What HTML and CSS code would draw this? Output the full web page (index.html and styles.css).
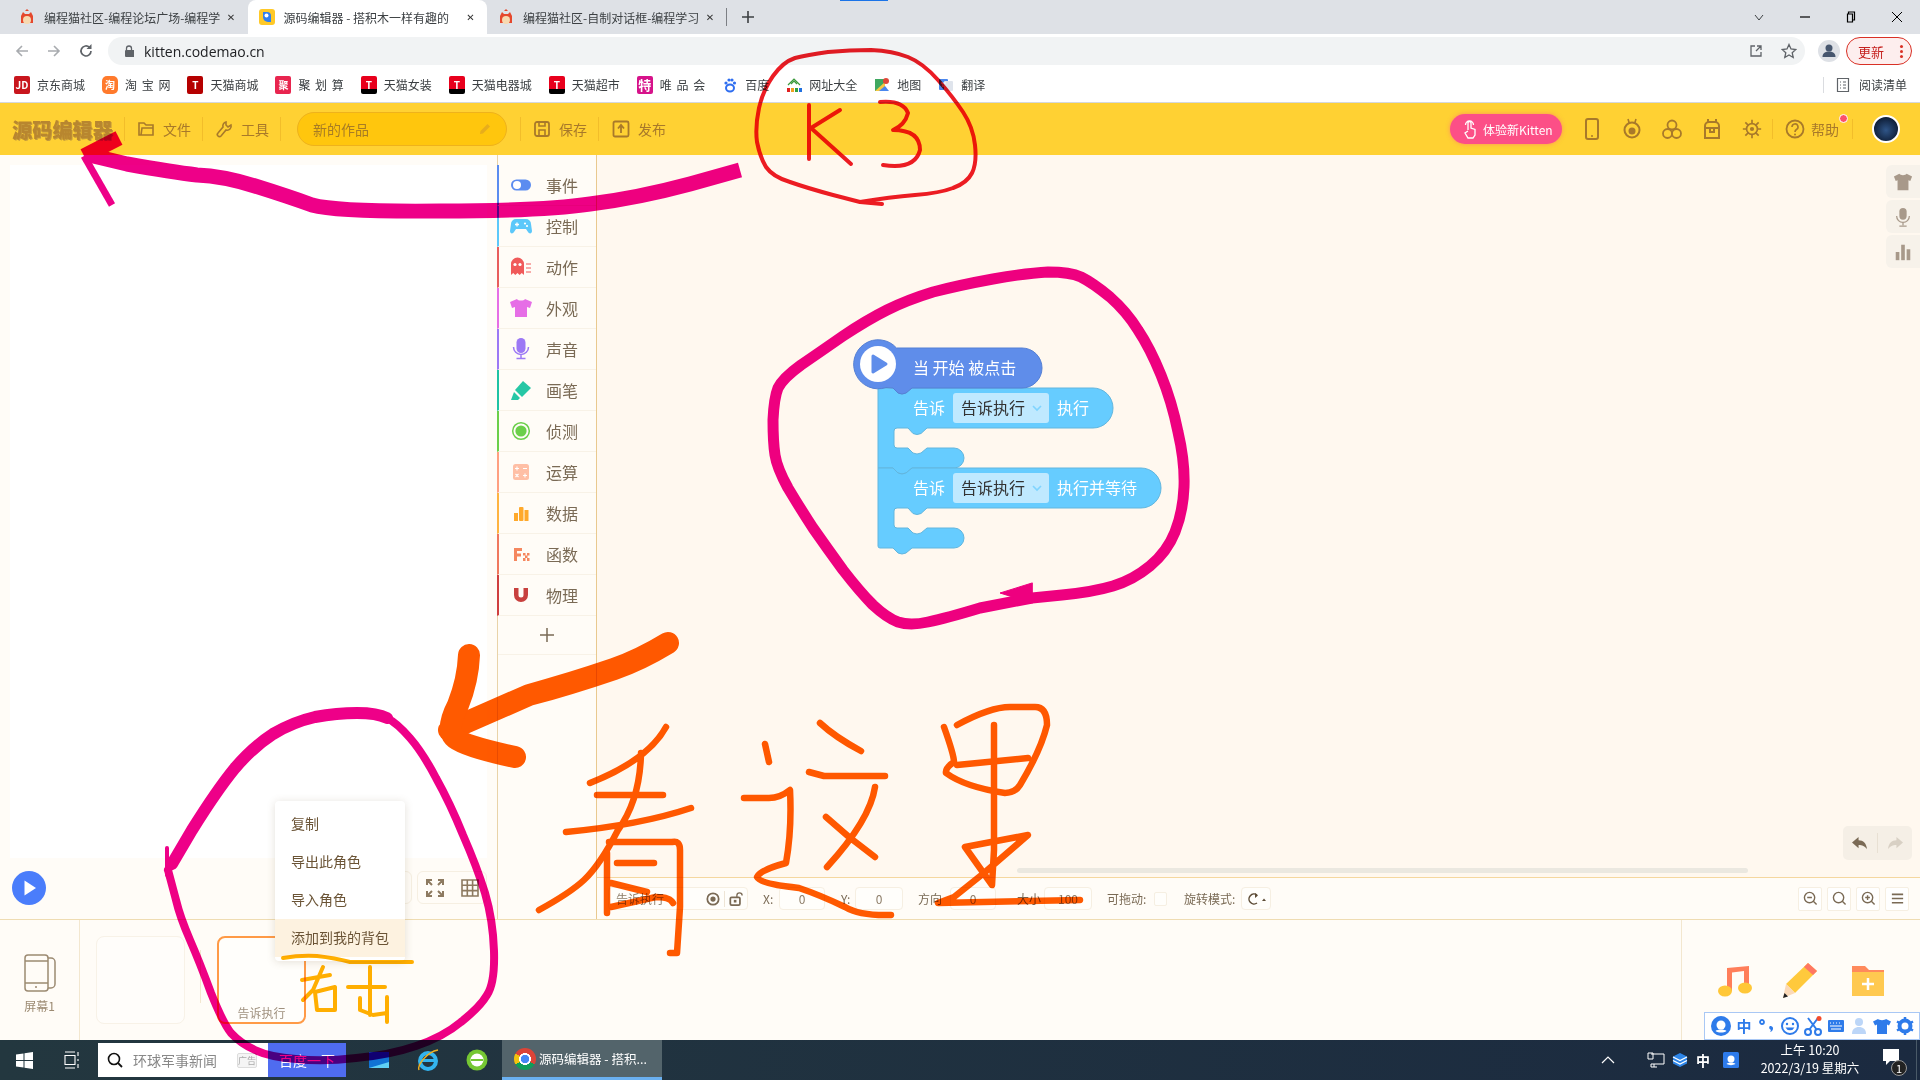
FILE: index.html
```html
<!DOCTYPE html>
<html lang="zh-CN">
<head>
<meta charset="utf-8">
<title>源码编辑器</title>
<link rel="stylesheet" href="styles.css">
</head>
<body>
<div class="tabbar">
  <div class="progress"></div>
  <div class="tab">
    <svg class="fav" viewBox="0 0 16 16"><path d="M2 14V7l2-4 2 2h4l2-2 2 4v7z" fill="#e5482d"/><circle cx="8" cy="11" r="4" fill="#f7d9b0"/><path d="M6 2l2-2 2 2z" fill="#e5482d"/></svg>
    <span class="tab-title">编程猫社区-编程论坛广场-编程学</span><span class="tab-x">✕</span>
  </div>
  <div class="tab active">
    <svg class="fav" viewBox="0 0 16 16"><rect width="16" height="16" rx="3" fill="#ffc928"/><path d="M4 3h4a4 4 0 0 1 4 4v6H9a5 5 0 0 1-5-5z" fill="#2f7ff0"/><circle cx="7.5" cy="6.5" r="2" fill="#fff"/></svg>
    <span class="tab-title">源码编辑器 - 搭积木一样有趣的</span><span class="tab-x">✕</span>
  </div>
  <div class="tab">
    <svg class="fav" viewBox="0 0 16 16"><path d="M2 14V7l2-4 2 2h4l2-2 2 4v7z" fill="#e5482d"/><circle cx="8" cy="11" r="4" fill="#f7d9b0"/><path d="M6 2l2-2 2 2z" fill="#e5482d"/></svg>
    <span class="tab-title">编程猫社区-自制对话框-编程学习</span><span class="tab-x">✕</span>
  </div>
  <div class="tab-sep"></div>
  <svg class="tab-plus" viewBox="0 0 14 14"><path d="M7 1v12M1 7h12" stroke="#3c4043" stroke-width="1.6"/></svg>
  <div class="win-btns">
    <svg class="win" viewBox="0 0 12 12"><path d="M2 4l4 5 4-5" fill="none" stroke="#3c4043"/></svg>
    <svg class="win" viewBox="0 0 12 12"><path d="M1 6h10" stroke="#000" stroke-width="1.2"/></svg>
    <svg class="win" viewBox="0 0 12 12"><path d="M3.5 3V1h6v8h-2M2.500 3h5v8h-5z" fill="none" stroke="#000" stroke-width="1.2"/></svg>
    <svg class="win" viewBox="0 0 12 12"><path d="M1 1l10 10M11 1L1 11" stroke="#000"/></svg>
  </div>
</div>

<div class="toolbar">
  <svg class="nav" viewBox="0 0 16 16"><path d="M14 8H3M8 3L3 8l5 5" fill="none" stroke="#a8abaf" stroke-width="1.6"/></svg>
  <svg class="nav" viewBox="0 0 16 16"><path d="M2 8h11M8 3l5 5-5 5" fill="none" stroke="#a8abaf" stroke-width="1.6"/></svg>
  <svg class="nav" viewBox="0 0 16 16"><path d="M13 8a5 5 0 1 1-1.500-3.600" fill="none" stroke="#5f6368" stroke-width="1.7"/><path d="M13.500 1v5h-5z" fill="#5f6368"/></svg>
  <div class="address">
    <svg class="lock" viewBox="0 0 10 12"><path d="M2.500 5V3.500a2.500 2.500 0 0 1 5 0V5" fill="none" stroke="#5f6368" stroke-width="1.300"/><rect y="5" width="10" height="7" rx="1" fill="#5f6368" x="1"/></svg>
    <span class="url">kitten.codemao.cn</span>
    <svg class="addr-ic share" viewBox="0 0 16 16"><path d="M9 3h4v4M13 3L8 8M7 3H3v10h10V9" fill="none" stroke="#5f6368" stroke-width="1.300"/></svg>
    <svg class="addr-ic" viewBox="0 0 16 16"><path d="M8 1.500l2 4.500 4.800.5-3.600 3.200 1 4.800L8 12l-4.200 2.500 1-4.800L1.200 6.500 6 6z" fill="none" stroke="#5f6368" stroke-width="1.300"/></svg>
  </div>
  <div class="profile"><svg viewBox="0 0 22 22"><circle cx="11" cy="11" r="11" fill="#dee1e6"/><circle cx="11" cy="8" r="3.500" fill="#46566e"/><path d="M4.500 17c0-4 3-5.500 6.500-5.500s6.500 1.500 6.500 5.500z" fill="#46566e"/></svg></div>
  <div class="update"><span>更新</span><i class="dots"></i></div>
</div>

<div class="bookmarks">
  <div class="bm"><i class="bi b-jd">JD</i>京东商城</div>
  <div class="bm"><i class="bi b-tb">淘</i>淘 宝 网</div>
  <div class="bm"><i class="bi b-t1">T</i>天猫商城</div>
  <div class="bm"><i class="bi b-ju">聚</i>聚 划 算</div>
  <div class="bm"><i class="bi b-t2">T</i>天猫女装</div>
  <div class="bm"><i class="bi b-t2">T</i>天猫电器城</div>
  <div class="bm"><i class="bi b-t2">T</i>天猫超市</div>
  <div class="bm"><i class="bi b-te">特</i>唯 品 会</div>
  <div class="bm"><svg class="bsvg" viewBox="0 0 16 16"><ellipse cx="8" cy="11" rx="4" ry="3.500" fill="none" stroke="#2f6ef0" stroke-width="2"/><circle cx="4" cy="6" r="1.600" fill="#2f6ef0"/><circle cx="7" cy="3" r="1.600" fill="#2f6ef0"/><circle cx="10" cy="3" r="1.600" fill="#2f6ef0"/><circle cx="12.500" cy="6" r="1.600" fill="#2f6ef0"/></svg>百度</div>
  <div class="bm"><svg class="bsvg" viewBox="0 0 16 16"><path d="M2 8l6-6 6 6M5 7l3-3 3 3" fill="none" stroke="#3c9a3c" stroke-width="1.200"/><rect x="1" y="11" width="3" height="4" fill="#e02020"/><rect x="5" y="11" width="3" height="4" fill="#f0a020"/><rect x="9" y="11" width="3" height="4" fill="#30a040"/><rect x="13" y="11" width="3" height="4" fill="#2070e0"/></svg>网址大全</div>
  <div class="bm"><svg class="bsvg" viewBox="0 0 16 16"><path d="M1 2h10v12H1z" fill="#3fa860"/><path d="M1 14L11 5v9z" fill="#f6c843"/><path d="M5 14l6-5 4 5z" fill="#4a87ee"/><circle cx="12" cy="4" r="3" fill="#e0483a"/></svg>地图</div>
  <div class="bm"><svg class="bsvg" viewBox="0 0 16 16"><rect x="1" y="2" width="9" height="11" rx="1" fill="#4a87ee"/><rect x="6" y="4" width="9" height="10" rx="1" fill="#dfe4ec"/><path d="M3 6h5M5 6v4" stroke="#fff"/></svg>翻译</div>
  <div class="reading">
    <svg class="bsvg" viewBox="0 0 16 16"><path d="M2.500 1.500h11v13h-11zM5 5h1M8 5h3M5 8h1M8 8h3M5 11h1M8 11h3" fill="none" stroke="#5f6368" stroke-width="1.200"/></svg>阅读清单
  </div>
</div>

<header class="appbar">
  <div class="logo">源码编辑器</div>
  <div class="hsep"></div>
  <div class="hitem"><svg class="hic" viewBox="0 0 18 18"><path d="M2 15V3h5l2 2h7v3H5l-1 7zM4 15h12V8" fill="none" stroke="#a8792a" stroke-width="1.600"/></svg>文件</div>
  <div class="hsep"></div>
  <div class="hitem"><svg class="hic" viewBox="0 0 18 18"><path d="M11 2a4 4 0 0 0-3 5l-5 6a2 2 0 0 0 3 3l5-6a4 4 0 0 0 5-5l-3 2-2-2z" fill="none" stroke="#a8792a" stroke-width="1.600"/></svg>工具</div>
  <div class="hsep sep-proj"></div>
  <div class="project"><span>新的作品</span><svg class="pen" viewBox="0 0 14 14"><path d="M9.500 2l2.500 2.500-7 7-3 .5.500-3z" fill="#e7ad1c"/></svg></div>
  <div class="hsep sep-save"></div>
  <div class="hitem"><svg class="hic" viewBox="0 0 18 18"><rect x="2" y="2" width="14" height="14" rx="2" fill="none" stroke="#a8792a" stroke-width="1.800"/><path d="M6 2v4h6V2M6 16v-6h6v6" fill="none" stroke="#a8792a" stroke-width="1.600"/></svg>保存</div>
  <div class="hsep sep-pub"></div>
  <div class="hitem"><svg class="hic" viewBox="0 0 18 18"><rect x="1.500" y="1.500" width="15" height="15" rx="1.500" fill="none" stroke="#a8792a" stroke-width="1.800"/><path d="M9 13V6M6 8.500L9 5l3 3.500" fill="none" stroke="#a8792a" stroke-width="1.800"/></svg>发布</div>
  <div class="appbar-right">
    <div class="try"><svg class="hand" viewBox="0 0 16 20"><path d="M6 11V4a1.500 1.500 0 0 1 3 0v5l4 1.500V16l-2 3H6l-3-5 3-2M3.500 6a4 4 0 0 1 8 0" fill="none" stroke="#fff" stroke-width="1.300"/></svg>体验新Kitten</div>
    <svg class="ric first" viewBox="0 0 20 24"><rect x="4" y="2" width="12" height="20" rx="2" fill="none" stroke="#a8792a" stroke-width="2"/><circle cx="10" cy="19" r="1" fill="#a8792a"/></svg>
    <svg class="ric" viewBox="0 0 20 24"><path d="M6 2l1.500 5M14 2l-1.500 5" stroke="#a8792a" stroke-width="1.600"/><circle cx="10" cy="13" r="7.500" fill="none" stroke="#a8792a" stroke-width="2"/><circle cx="10" cy="14" r="3.500" fill="#a8792a"/></svg>
    <svg class="ric" viewBox="0 0 20 24"><g fill="none" stroke="#a8792a" stroke-width="1.800"><circle cx="10" cy="8" r="4.500"/><circle cx="5.500" cy="16.500" r="4.500"/><circle cx="14.500" cy="16.500" r="4.500"/></g></svg>
    <svg class="ric" viewBox="0 0 20 24"><path d="M6 5V2M14 5V2M3 9a4 4 0 0 1 4-4h6a4 4 0 0 1 4 4v12H3zM3 11h14M8 11v4h4v-4" fill="none" stroke="#a8792a" stroke-width="2"/></svg>
    <svg class="ric" viewBox="0 0 24 24"><circle cx="12" cy="12" r="6.500" fill="none" stroke="#a8792a" stroke-width="2"/><circle cx="12" cy="12" r="2.500" fill="#a8792a"/><path d="M12 1v5M12 18v5M1 12h5M18 12h5M4 4l4 4M16 16l4 4M20 4l-4 4M8 16l-4 4" stroke="#a8792a" stroke-width="2"/></svg>
    <div class="hsep sep-help"></div>
    <div class="help"><svg class="hic big" viewBox="0 0 20 20"><circle cx="10" cy="10" r="8.500" fill="none" stroke="#a8792a" stroke-width="1.800"/><path d="M7 8a3 3 0 1 1 4.500 2.500c-1 .6-1.500 1-1.500 2.500" fill="none" stroke="#a8792a" stroke-width="1.600"/><circle cx="10" cy="15.500" r="1" fill="#a8792a"/></svg>帮助<i class="reddot"></i></div>
    <div class="hsep sep-av"></div>
    <div class="avatar"></div>
  </div>
</header>

<main class="main">
  <section class="left">
    <div class="stage"></div>
    <div class="stage-ctl">
      <div class="run"><svg viewBox="0 0 34 34"><circle cx="17" cy="17" r="17" fill="#4a7dfb"/><path d="M12.500 9.500L24 17l-11.500 7.500z" fill="#fff"/></svg></div>
      <div class="ctl-box hidden-box"></div>
      <div class="ctl-box">
        <svg class="ctl-ic" viewBox="0 0 18 18"><path d="M1 6V1h5M12 1h5v5M17 12v5h-5M6 17H1v-5M1 1l5 5M17 1l-5 5M17 17l-5-5M1 17l5-5" fill="none" stroke="#8d7a60" stroke-width="2"/></svg>
        <svg class="ctl-ic" viewBox="0 0 18 18"><path d="M1 1h16v16H1zM1 6.300h16M1 11.600h16M6.300 1v16M11.600 1v16" fill="none" stroke="#8d7a60" stroke-width="1.600"/></svg>
      </div>
    </div>
  </section>

  <nav class="cats">
    <div class="cat c1"><svg class="cat-ic" viewBox="0 0 24 24"><rect x="2" y="6.500" width="20" height="11" rx="5.500" fill="#5b8cf0"/><circle cx="8" cy="12" r="4" fill="#fff"/></svg>事件</div>
    <div class="cat c2"><svg class="cat-ic" viewBox="0 0 24 24"><path d="M7 5h10a5 5 0 0 1 5 5l1 7c0 3-3 3-4 1l-2-3H7l-2 3c-1 2-4 2-4-1l1-7a5 5 0 0 1 5-5z" fill="#5cc8fa"/><path d="M6 10.500h4M8 8.500v4" stroke="#fff" stroke-width="1.300"/><circle cx="16" cy="9.500" r="1.100" fill="#fff"/><circle cx="18" cy="12" r="1.100" fill="#fff"/></svg>控制</div>
    <div class="cat c3"><svg class="cat-ic" viewBox="0 0 24 24"><path d="M2 20V9a6.500 6.500 0 0 1 13 0v11l-2.200-2-2.200 2-2.100-2-2.200 2-2.100-2z" fill="#f05a5a"/><circle cx="6" cy="9.500" r="1.600" fill="#fff"/><circle cx="11" cy="9.500" r="1.600" fill="#fff"/><path d="M17 9h5M17 13h5M17 17h5" stroke="#f05a5a" stroke-width="1"/></svg>动作</div>
    <div class="cat c4"><svg class="cat-ic" viewBox="0 0 24 24"><path d="M8 3c1 2 7 2 8 0l7 3-2 6-3-1v10H6V11l-3 1-2-6z" fill="#e66ee6"/></svg>外观</div>
    <div class="cat c5"><svg class="cat-ic" viewBox="0 0 24 24"><rect x="7.500" y="1" width="9" height="15" rx="4.500" fill="#9c78f5"/><path d="M4.500 10a7.500 7.500 0 0 0 15 0M12 18v3M7.500 21.500h9" fill="none" stroke="#9c78f5" stroke-width="1.500"/></svg>声音</div>
    <div class="cat c6"><svg class="cat-ic" viewBox="0 0 24 24"><path d="M14 3l8 7-9 9-7-7z" fill="#26c7a5"/><path d="M5 14l-3 8h7l2-2z" fill="#26c7a5"/></svg>画笔</div>
    <div class="cat c7"><svg class="cat-ic" viewBox="0 0 24 24"><circle cx="12" cy="12" r="8.300" fill="none" stroke="#6bcf4a" stroke-width="1.500"/><circle cx="12" cy="12" r="5.600" fill="#6bcf4a"/></svg>侦测</div>
    <div class="cat c8"><svg class="cat-ic" viewBox="0 0 24 24"><rect x="4" y="4" width="16" height="16" rx="2.500" fill="#ffbfa5"/><path d="M6 8.500h4M8 6.500v4M14 8.500h4M6.500 14l3 3M9.500 14l-3 3M14 15.500h4M16 13.500v4" stroke="#fff" stroke-width="1.100"/></svg>运算</div>
    <div class="cat c9"><svg class="cat-ic" viewBox="0 0 24 24"><rect x="5" y="12" width="4" height="8" fill="#ffa92b"/><rect x="10" y="6" width="4.500" height="14" rx="1" fill="#ffa92b"/><rect x="15.500" y="9" width="4" height="11" fill="#ffa92b"/></svg>数据</div>
    <div class="cat c10"><svg class="cat-ic" viewBox="0 0 24 24"><path d="M5 6h8v3H8v2.500h4v3H8V19H5z" fill="#f5875f"/><path d="M14 11h2.500v2.500H14zM18 11h2.500v2.500H18zM16 13.500h2.500v2.500H16zM14 16h2.500v3H14zM18 16h2.500v3H18z" fill="#f5875f"/></svg>函数</div>
    <div class="cat c11"><svg class="cat-ic" viewBox="0 0 24 24"><path d="M5 5v7a7 7 0 0 0 14 0V5h-4.500v7a2.500 2.500 0 0 1-5 0V5z" fill="#c8403e"/></svg>物理</div>
    <div class="cat-add"><svg viewBox="0 0 14 14"><path d="M7 0v14M0 7h14" stroke="#7a6a55" stroke-width="1.500"/></svg></div>
  </nav>

  <section class="right">
    <div class="workspace">
      <svg class="blocks" viewBox="0 0 1323 723">
        <g transform="translate(-597 -155)" class="blk">
          <path class="b-mid" d="M878 388L893 388L898 393Q902 395 906 393L912 388L1093 388A20 20 0 0 1 1093 428L927 428L921 433.500Q917 435.500 913 433.500L908 428L897 428Q894 428 894 431L894 445Q894 448 897 448L908 448L913 453Q917 455 921 453L927 448L954 448A10 10 0 0 1 954 468L912 468L906 473Q902 475 898 473L893 468L878 468Z"/>
          <path class="b-mid" d="M878 468L893 468L898 473Q902 475 906 473L912 468L1141 468A20 20 0 0 1 1141 508L927 508L921 513.500Q917 515.500 913 513.500L908 508L897 508Q894 508 894 511L894 525Q894 528 897 528L908 528L913 533Q917 535 921 533L927 528L954 528A10 10 0 0 1 954 548L912 548L906 553Q902 555 898 553L893 548L880 548Q878 548 878 546Z"/>
          <path class="b-hat" d="M896.500 348L1022 348A20 20 0 0 1 1022 388L912 388L906 393Q902 395 898 393L893 388L886 387.500A24.500 24.500 0 1 1 896.500 348Z"/>
          <circle cx="878" cy="364" r="18" fill="#fff"/>
          <path d="M873 356L886 364L873 372Z" fill="#5f8dea" stroke="#5f8dea" stroke-width="3" stroke-linejoin="round"/>
          <text class="bt" x="913" y="374">当 开始 被点击</text>
          <text class="bt" x="913" y="414">告诉</text>
          <rect class="fld" x="953" y="393" width="96" height="30" rx="3"/>
          <text class="bf" x="961" y="414">告诉执行</text>
          <path class="chev" d="M1033 406l4 4 4-4"/>
          <text class="bt" x="1057" y="414">执行</text>
          <text class="bt" x="913" y="494">告诉</text>
          <rect class="fld" x="953" y="473" width="96" height="30" rx="3"/>
          <text class="bf" x="961" y="494">告诉执行</text>
          <path class="chev" d="M1033 486l4 4 4-4"/>
          <text class="bt" x="1057" y="494">执行并等待</text>
        </g>
      </svg>
      <div class="rail">
        <div class="rail-tab"><svg viewBox="0 0 22 22"><path d="M7 2c1 2 7 2 8 0l6 3-2 5-2-1v11H5V9L3 10 1 5z" fill="#a8998a"/></svg></div>
        <div class="rail-tab"><svg viewBox="0 0 22 22"><rect x="7" y="1" width="8" height="13" rx="4" fill="#a8998a"/><path d="M4 10a7 7 0 0 0 14 0M11 17v3M7 21h8" fill="none" stroke="#a8998a" stroke-width="1.400"/></svg></div>
        <div class="rail-tab"><svg viewBox="0 0 22 22"><rect x="3" y="11" width="4" height="9" fill="#a8998a"/><rect x="9" y="3" width="4" height="17" fill="#a8998a"/><rect x="15" y="8" width="4" height="12" fill="#a8998a"/></svg></div>
      </div>
      <div class="undo">
        <svg viewBox="0 0 18 16"><path d="M8 1L1 7l7 6V9.500c4 0 6.500 1 9 4.500-.5-6-4-9.500-9-9.500z" fill="#7a6a55"/></svg>
        <i></i>
        <svg viewBox="0 0 18 16"><path d="M10 1l7 6-7 6V9.500c-4 0-6.500 1-9 4.500 .5-6 4-9.500 9-9.500z" fill="#d8d0c4"/></svg>
      </div>
      <div class="hscroll"></div>
    </div>
    <div class="props">
      <div class="inp name"><span>告诉执行</span>
        <svg class="pi eye" viewBox="0 0 16 16"><circle cx="8" cy="8" r="6.500" fill="none" stroke="#7a6a55" stroke-width="2"/><circle cx="8" cy="8" r="3" fill="#7a6a55"/></svg><i class="nsep"></i>
        <svg class="pi" viewBox="0 0 16 16"><rect x="1.500" y="6" width="11" height="9" rx="1.500" fill="none" stroke="#7a6a55" stroke-width="2"/><rect x="5.500" y="9" width="3" height="3" fill="#7a6a55"/><path d="M9 6V4a3 3 0 0 1 6 0" fill="none" stroke="#7a6a55" stroke-width="1.500"/></svg>
      </div>
      <label class="pl lx">X:</label><div class="inp w46">0</div>
      <label class="pl ly">Y:</label><div class="inp w48">0</div>
      <label class="pl ld">方向</label><div class="inp w46">0</div>
      <label class="pl ls">大小</label><div class="inp w48">100</div>
      <label class="pl ldrag">可拖动:</label><div class="chk"></div>
      <label class="pl lrot">旋转模式:</label>
      <div class="inp rot"><svg viewBox="0 0 20 14"><path d="M11 3a5 5 0 1 0 0 8" fill="none" stroke="#5d4c36" stroke-width="1.500"/><path d="M9 1v5l3-2.500zM16 9h4l-2-2.500z" fill="#5d4c36"/></svg></div>
      <div class="zooms">
        <div class="zb"><svg viewBox="0 0 16 16"><circle cx="7" cy="7" r="5.500" fill="none" stroke="#7a6a55" stroke-width="1.500"/><path d="M4.500 7h5M11 11l3.500 3.500" stroke="#7a6a55" stroke-width="1.500"/></svg></div>
        <div class="zb"><svg viewBox="0 0 16 16"><circle cx="7" cy="7" r="5.500" fill="none" stroke="#7a6a55" stroke-width="1.500"/><path d="M11 11l3.500 3.500" stroke="#7a6a55" stroke-width="1.500"/></svg></div>
        <div class="zb"><svg viewBox="0 0 16 16"><circle cx="7" cy="7" r="5.500" fill="none" stroke="#7a6a55" stroke-width="1.500"/><path d="M4.500 7h5M7 4.500v5M11 11l3.500 3.500" stroke="#7a6a55" stroke-width="1.500"/></svg></div>
        <div class="zb"><svg viewBox="0 0 16 16"><path d="M2 3.500h12M2 8h12M2 12.500h12" stroke="#7a6a55" stroke-width="1.800"/></svg></div>
      </div>
    </div>
  </section>
</main>

<section class="bottom">
  <div class="screens">
    <svg class="phone" viewBox="0 0 32 38"><rect x="1" y="1" width="23" height="36" rx="3" fill="none" stroke="#9c8a72" stroke-width="1.500"/><path d="M24 4h3a4 4 0 0 1 4 4v22a4 4 0 0 1-4 4h-3M1 7h23M1 29h23" fill="none" stroke="#9c8a72" stroke-width="1.500"/><circle cx="12" cy="33" r="1" fill="#9c8a72"/></svg>
    <span>屏幕1</span>
  </div>
  <div class="card"></div>
  <div class="card-sep"></div>
  <div class="card sel"><span>告诉执行</span></div>
  <div class="assets">
    <svg class="asset" viewBox="0 0 40 40"><path d="M13 8l22-2v22h-5V11l-12 1.500V31h-5z" fill="#ff7e5a"/><ellipse cx="11" cy="31" rx="7" ry="5.500" fill="#ffc738"/><ellipse cx="31" cy="28" rx="7" ry="5.500" fill="#ffc738"/></svg>
    <svg class="asset" viewBox="0 0 40 40"><path d="M27 3l9 8L14 33 5 24z" fill="#ffc93c"/><path d="M27 3l9 8-4 4-9-8z" fill="#ff7763"/><path d="M5 24l9 9-12 5z" fill="#fbd9b8"/><path d="M3.500 33l3.500 3.500-5 1.500z" fill="#222"/></svg>
    <svg class="asset" viewBox="0 0 40 40"><path d="M4 6h13l4 4h15v6H4z" fill="#ff8a5c"/><rect x="4" y="12" width="32" height="24" fill="#ffc950"/><path d="M20 18v12M14 24h12" stroke="#fff" stroke-width="2.500"/></svg>
    <div class="ime">
      <svg class="im" viewBox="0 0 20 20"><circle cx="10" cy="10" r="10" fill="#2e7bea"/><circle cx="10" cy="9" r="4.500" fill="#fff"/><path d="M4.500 15c2-2 9-2 11 0-3 2-8 2-11 0z" fill="#fff"/></svg>
      <b class="imt">中</b>
      <svg class="im" viewBox="0 0 20 20"><circle cx="5" cy="6" r="2" fill="none" stroke="#2e7bea" stroke-width="1.800"/><path d="M13 10a2.500 2.500 0 0 1 3 3c-.3 2-2 3-3 3 1-1 1-2 .5-2.500a2 2 0 0 1-.5-3.500z" fill="#2e7bea"/></svg>
      <svg class="im" viewBox="0 0 20 20"><circle cx="10" cy="10" r="8" fill="none" stroke="#2e7bea" stroke-width="2"/><circle cx="7" cy="8" r="1.200" fill="#2e7bea"/><circle cx="13" cy="8" r="1.200" fill="#2e7bea"/><path d="M5.500 11.500a5 5 0 0 0 9 0z" fill="#2e7bea"/></svg>
      <svg class="im" viewBox="0 0 20 20"><circle cx="5" cy="16" r="3" fill="none" stroke="#2e7bea" stroke-width="2"/><circle cx="15" cy="16" r="3" fill="none" stroke="#2e7bea" stroke-width="2"/><path d="M6 14L15 2M14 14L5 2" stroke="#2e7bea" stroke-width="2"/><circle cx="16" cy="2.500" r="2.500" fill="#f44b2a"/></svg>
      <svg class="im" viewBox="0 0 20 20"><rect x="2" y="4" width="16" height="12" rx="1" fill="#2e7bea"/><path d="M4 7h1M7 7h1M10 7h1M13 7h1M16 7h0M4 10h12M5 13h10" stroke="#fff" stroke-width="1.200"/></svg>
      <svg class="im" viewBox="0 0 20 20"><circle cx="10" cy="6" r="4" fill="#bcd6f8"/><path d="M3 18c0-5 3-7 7-7s7 2 7 7z" fill="#bcd6f8"/></svg>
      <svg class="im" viewBox="0 0 20 20"><path d="M6 3c1 1.500 7 1.500 8 0l5 2.500-2 4-2-1V18H5V8.500l-2 1-2-4z" fill="#2e7bea"/></svg>
      <svg class="im" viewBox="0 0 20 20"><circle cx="10" cy="10" r="5.500" fill="none" stroke="#2e7bea" stroke-width="4"/><path d="M10 1v3M10 16v3M2 5.500l2.600 1.500M15.400 13l2.600 1.500M2 14.500L4.600 13M15.400 7L18 5.500" stroke="#2e7bea" stroke-width="2.500"/></svg>
    </div>
  </div>
</section>

<footer class="taskbar">
  <svg class="tb-win" viewBox="0 0 17 17"><path d="M0 2.500L7.500 1.400v6.600H0zM8.500 1.200L17 0v8H8.500zM0 9h7.500v6.600L0 14.500zM8.500 9H17v8l-8.500-1.200z" fill="#fff"/></svg>
  <svg class="tb-view" viewBox="0 0 18 18"><path d="M3 1h10M3 4.500h10v9H3zM3 17h10M16 1v4M16 8v2M16 13v4" fill="none" stroke="#fff" stroke-width="1.100"/></svg>
  <div class="search">
    <svg class="s-ic" viewBox="0 0 16 16"><circle cx="7" cy="7" r="5.500" fill="none" stroke="#111" stroke-width="1.600"/><path d="M11 11l4 4" stroke="#111" stroke-width="1.800"/></svg>
    <span class="s-text">环球军事新闻</span><span class="s-ad">广告</span>
  </div>
  <div class="s-btn">百度一下</div>
  <svg class="tb-app ol" viewBox="0 0 24 24"><rect x="2" y="4" width="20" height="16" fill="#1173d4"/><path d="M2 20l20-6v6z" fill="#5fd0f5"/></svg>
  <svg class="tb-app" viewBox="0 0 24 24"><circle cx="12" cy="13" r="8" fill="none" stroke="#33b4ee" stroke-width="4"/><path d="M5 12.500h15" stroke="#33b4ee" stroke-width="3"/><path d="M3 22c-2-5 8-18 19-20" fill="none" stroke="#f0b020" stroke-width="1.500"/></svg>
  <svg class="tb-app" viewBox="0 0 24 24"><circle cx="12" cy="12" r="10.500" fill="#75c733"/><circle cx="12" cy="12" r="6.500" fill="#fff"/><path d="M6 11h12v2H6z" fill="#75c733"/></svg>
  <div class="tb-chrome"><i class="chrome"></i><span>源码编辑器 - 搭积...</span></div>
  <div class="tray">
    <svg class="caret" viewBox="0 0 14 8"><path d="M1 7l6-6 6 6" fill="none" stroke="#fff" stroke-width="1.200"/></svg>
    <svg class="ti net" viewBox="0 0 18 16"><path d="M4 2h13v10H4M4 12v3h6M7 12v3M1 1h5v6H1z" fill="none" stroke="#fff"/></svg>
    <svg class="ti stack" viewBox="0 0 16 16"><path d="M8 1l7 3.500v7L8 15l-7-3.500v-7z" fill="#2d85e8"/><path d="M1 5l7 3.500L15 5M1 8.500L8 12l7-3.500" fill="none" stroke="#fff" stroke-width="1.300"/></svg>
    <b class="ti-t">中</b>
    <svg class="ti qq" viewBox="0 0 16 16"><rect width="16" height="16" rx="1.500" fill="#2e7bea"/><circle cx="8" cy="7" r="3.500" fill="#fff"/><path d="M3.500 12c2-2 7-2 9 0-3 1.500-6 1.500-9 0z" fill="#fff"/></svg>
    <div class="clock"><span>上午 10:20</span><span>2022/3/19 星期六</span></div>
    <div class="notif"><svg viewBox="0 0 18 18"><path d="M1 1h16v12H8l-4 4v-4H1z" fill="#fff"/></svg><i>1</i></div>
    <i class="desk"></i>
  </div>
</footer>

<div class="menu">
  <div class="mi">复制</div>
  <div class="mi">导出此角色</div>
  <div class="mi">导入角色</div>
  <div class="mi on">添加到我的背包</div>
</div>

<svg class="ink" viewBox="0 0 1920 1080">
  <g class="red">
    <path d="M882 204L860 202L833 195Q807 188 790 182Q773 177 766 167Q760 157 757 142Q755 127 759 108Q763 90 773 76Q783 62 795 58Q807 55 828 52Q850 50 871 50Q893 51 908 57Q923 63 938 80Q953 97 963 112Q973 127 975 145Q977 163 972 173Q967 183 953 188Q940 193 915 195Q890 197 860 202"/>
    <path d="M809 105V159M840 110L811 128L851 164M880 102Q903 100 908 113Q905 125 893 130Q920 130 920 150Q915 170 883 165"/>
  </g>
  <g class="pink">
    <path class="p-arrow" d="M740 170L690 184Q638 198 590 204Q542 211 440 211Q338 212 312 205Q287 196 255 186Q223 176 197 175Q172 172 127 164L85 154"/>
    <path class="p-head" d="M84 156L119 138"/>
    <path d="M84 156L112 205" class="p-tail"/>
    <path class="p-loop" d="M1032 598L1062 595Q1093 592 1113 586Q1133 580 1150 566Q1167 552 1175 532Q1183 512 1184 487Q1185 462 1178 432Q1172 402 1161 375Q1150 348 1138 330Q1127 312 1110 297Q1093 283 1081 277Q1070 272 1048 272Q1027 273 993 279Q960 285 933 292Q907 300 887 310Q867 320 843 336Q820 352 801 365Q783 378 778 388Q774 398 773 420Q773 442 775 455Q777 468 788 488Q800 508 813 528Q827 548 843 570Q860 592 873 605Q887 618 898 622Q910 626 928 622Q947 618 980 608L1032 598"/>
    <path class="p-fill" d="M1032 583L1000 593L1032 603Z"/>
    <path class="p-loop2" d="M168 870L192 830Q217 790 235 768Q253 747 273 734Q293 722 315 717Q337 713 357 713Q377 713 387 718Q397 723 410 738Q423 753 436 778Q450 803 463 835Q477 867 485 893Q493 920 494 951Q495 983 487 995Q480 1007 461 1022Q443 1037 416 1046Q390 1055 356 1058Q323 1062 296 1059Q270 1057 255 1050Q240 1043 231 1033Q223 1023 211 993Q200 963 190 940Q180 917 176 900L168 870"/>
    <path class="p-thick" d="M172 864L192 830Q217 790 235 768Q253 747 273 734Q293 722 315 717Q337 713 357 713Q377 713 387 718"/>
    <path class="p-tick" d="M167 848V875"/>
  </g>
  <g class="orange">
    <path class="o-big" d="M668 643Q640 660 614 669Q570 684 529 695Q490 712 449 730"/>
    <path class="o-big" d="M469 655Q468 680 458 705Q446 728 454 737Q462 746 515 757"/>
    <path d="M666 727Q648 760 590 783M597 795H663M566 832Q640 825 691 808M641 753Q640 800 618 830Q600 865 584 880Q570 893 539 910"/>
    <path d="M609 842H672Q680 840 680 850V907L677 953H670M607 853V913M617 863H654M611 883L647 892M611 907L656 897Q670 897 673 903"/>
    <path d="M765 744L769 762M820 723Q835 737 861 751M809 772L824 776H885M875 787Q870 820 827 867M826 817L849 837L875 857"/>
    <path d="M744 798H769Q780 798 790 790Q792 830 786 863Q760 870 757 877Q760 884 799 888Q820 895 845 907Q860 916 891 915"/>
    <path d="M944 727Q954 755 954 762Q945 768 946 773Q965 787 1005 793Q1015 793 1020 785Q1041 750 1047 725Q1047 707 1035 707H1010Q990 707 957 725M957 765L1028 758"/>
    <path d="M994 725V850L992 885L965 847L1028 835L984 873L954 897L938 903L1080 900"/>
  </g>
  <g class="amber">
    <path d="M283 958Q300 955 317 956Q335 958 350 962H412M302 980L330 975M323 967L313 990L303 1000M315 992L335 987V1010H317Z"/>
    <path d="M348 987H385M370 967V1015M360 998V1010L373 1015L387 1013M387 997V1022"/>
  </g>
</svg>
</body>
</html>
```

FILE: styles.css
```css
*{box-sizing:border-box}
html,body{margin:0;padding:0}
body{width:1920px;height:1080px;overflow:hidden;position:relative;display:flex;flex-direction:column;font-family:"Noto Sans CJK SC","Noto Sans",sans-serif;background:#fffcf7;color:#7a6a55}
svg{display:block;flex:none}
i{font-style:normal}

/* browser tabs */
.tabbar{height:34px;background:#dee1e6;display:flex;align-items:stretch;padding-left:8px;position:relative;flex:none}
.progress{position:absolute;left:840px;top:0;width:48px;height:1px;background:#1a73e8}
.tab{width:239.500px;display:flex;align-items:center;padding-left:11px;font-size:12px;color:#3c4043;border-radius:8px 8px 0 0}
.tab.active{background:#fff}
.fav{width:16px;height:16px;margin-right:9px}
.tab-title{width:176px;white-space:nowrap}
.tab-x{width:12px;margin-left:5px;font-size:10px;text-align:center;font-family:"DejaVu Sans",sans-serif;color:#333}
.tab-sep{width:1px;height:18px;background:#7c7f84;align-self:center;margin-left:-1px}
.tab-plus{width:14px;height:14px;align-self:center;margin-left:14px}
.win-btns{margin-left:auto;display:flex;align-items:center;gap:34px;padding-right:17px}
.win{width:12px;height:12px}

/* toolbar */
.toolbar{height:34px;background:#fff;display:flex;align-items:center;padding-left:14px;flex:none}
.nav{width:16px;height:16px;margin-right:16px}
.address{height:28px;width:1697px;margin-left:-2px;background:#f1f3f4;border-radius:14px;display:flex;align-items:center;padding-left:16px}
.lock{width:10px;height:12px;margin-right:10px}
.url{font-family:"Open Sans",sans-serif;font-size:14px;color:#202124}
.addr-ic{width:16px;height:16px;margin-left:17px}
.share{margin-left:auto}
.address .addr-ic:last-child{margin-right:8px}
.profile{width:22px;height:22px;margin-left:13px}
.update{width:66px;height:28px;margin-left:6px;border:1px solid #d93025;border-radius:14px;background:#fdeeee;display:flex;align-items:center;padding-left:11px;font-size:13px;color:#c5221f}
.dots{width:3px;height:3px;border-radius:50%;background:#d93025;margin-left:16px;box-shadow:0 -5px 0 #d93025,0 5px 0 #d93025}

/* bookmarks */
.bookmarks{height:35px;background:#fff;border-bottom:1px solid #d5d8dc;display:flex;align-items:center;padding:0 0 1px 14px;gap:17px;font-size:12px;color:#3c4043;flex:none;word-spacing:2px}
.bm{display:flex;align-items:center;gap:7px;white-space:nowrap}
.bi{width:16px;height:18px;display:flex;align-items:center;justify-content:center;font-size:10px;font-weight:700;color:#fff;border-radius:2px}
.b-jd{background:#c8161d}
.b-tb{background:#ff7a2c;border-radius:5px}
.b-t1{background:#b50000}
.b-ju{background:#e8254f}
.b-t2{background:linear-gradient(#e8001c 72%,#000 72%)}
.b-te{background:#d6128a;font-size:13px}
.bsvg{width:16px;height:16px}
.reading{margin-left:auto;display:flex;align-items:center;gap:8px;padding:0 13px 0 11px;border-left:1px solid #dadce0;height:16px}

/* app header */
.appbar{height:52px;background:#ffd133;display:flex;align-items:center;padding-left:12px;font-size:14px;color:#a8792a;flex:none}
.logo{font-size:20px;font-weight:900;color:#b8862f;letter-spacing:.2px;width:101px;white-space:nowrap;text-shadow:1px 1px 0 #c49a3c}
.hsep{width:1px;height:24px;background:#f2bd2a;margin:0 12px 0 11px}
.sep-proj{margin-right:16px}
.hitem{display:flex;align-items:center;gap:8px;white-space:nowrap}
.hic{width:18px;height:18px}
.hic.big{width:20px;height:20px}
.project{width:210px;height:34px;border:1px solid #eeb21c;border-radius:17px;background:#ffc60d;display:flex;align-items:center;justify-content:space-between;padding:0 14px 0 15px;color:#a77c25}
.pen{width:14px;height:14px}
.sep-save{margin-left:13px}
.sep-pub{margin-right:13px}
.appbar-right{margin-left:auto;display:flex;align-items:center;padding-right:20px}
.try{width:112px;height:30px;border-radius:15px;background:#fc4f87;box-shadow:0 0 4px rgba(252,79,135,.5);color:#fff;font-size:12px;display:flex;align-items:center;padding-left:12px;gap:5px;white-space:nowrap}
.hand{width:16px;height:20px}
.ric{width:20px;height:24px;margin-left:20px}
.ric.first{margin-left:20px}
.sep-help{margin:0 12px 0 10px;height:20px}
.help{display:flex;align-items:center;gap:6px;position:relative;white-space:nowrap}
.reddot{position:absolute;right:-9px;top:-5px;width:9px;height:9px;border-radius:50%;background:#fc4f6a;border:1px solid #fff}
.sep-av{margin:0 19px 0 13px;height:20px}
.avatar{width:28px;height:28px;border-radius:50%;border:2px solid #fff;background:radial-gradient(circle at 50% 55%,#2f5588,#0d1b33 75%)}

/* main */
.main{height:764px;display:flex;flex:none}
.left{width:497px;background:#fffcf7;padding:10px 10px 0;display:flex;flex-direction:column}
.stage{height:693px;background:#fff}
.stage-ctl{height:61px;display:flex;align-items:center;padding-bottom:2px}
.run{width:34px;height:34px;margin:0 auto 0 2px}
.ctl-box{height:33px;width:70px;border:1px solid #f6efe2;border-radius:6px;display:flex;align-items:center;gap:17px;padding-left:8px;background:#fffcf7}
.hidden-box{width:60px;margin-right:5px}
.ctl-ic{width:18px;height:18px}
.cats{width:100px;background:#fffcf7;border-left:1px solid #e9d3a8;border-right:1px solid #e9c98f;padding-top:10px;display:flex;flex-direction:column}
.cat{height:41px;border-left:2px solid #5b8cf0;border-bottom:1px solid #f8f2e7;display:flex;align-items:center;font-size:16px;color:#7a6a55;padding-left:10px;gap:13px;margin-left:-1px}
.cat-ic{width:24px;height:24px}
.c2{border-left-color:#5cc8fa}
.c3{border-left-color:#e85d5d}
.c4{border-left-color:#e66ee6}
.c5{border-left-color:#9c78f5}
.c6{border-left-color:#1fc3a3}
.c7{border-left-color:#6bcf4a}
.c8{border-left-color:#ff9f80}
.c9{border-left-color:#ffb340}
.c10{border-left-color:#f0785e}
.c11{border-left-color:#cf3f3f}
.cat-add{height:39px;display:flex;align-items:center;justify-content:center;border-bottom:1px solid #f8f2e7}
.cat-add svg{width:14px;height:14px}
.right{flex:1;display:flex;flex-direction:column;min-width:0}
.workspace{height:723px;background:#fff8ef;position:relative;border-bottom:1px solid #f5d79f}
.blocks{position:absolute;left:0;top:0;width:1323px;height:723px}
.b-mid{fill:#66ccff;stroke:#62b6de;stroke-width:1}
.b-hat{fill:#5f8dea;stroke:#5580d4;stroke-width:1}
.fld{fill:#bfe9ff}
.chev{fill:none;stroke:#7fd4ff;stroke-width:1.600}
.bt{font-size:16px;fill:#fff}
.bf{font-size:16px;fill:#333}
.rail{position:absolute;right:0;top:10px;display:flex;flex-direction:column;gap:2px}
.rail-tab{width:34px;height:33px;background:#f7f2ea;border-radius:6px 0 0 6px;display:flex;align-items:center;justify-content:center}
.rail-tab svg{width:20px;height:20px}
.undo{position:absolute;right:8px;top:671px;width:69px;height:34px;background:#f5efe6;border-radius:5px;display:flex;align-items:center;justify-content:center;gap:9px}
.undo svg{width:17px;height:15px}
.undo i{width:1px;height:20px;background:#e8e0d3}
.hscroll{position:absolute;left:420px;top:713px;width:731px;height:5px;border-radius:3px;background:#ebe8e0}
.props{height:41px;background:#fffcf7;display:flex;align-items:center;padding:0 11px;font-size:12px;color:#7a6a55}
.inp{height:23px;background:#fffefb;border:1px solid #f6efe2;border-radius:4px;display:flex;align-items:center;justify-content:center;color:#8d7d68;font-size:12px}
.name{width:140px;justify-content:flex-start;padding-left:7px}
.name span{width:91px}
.pi{width:14px;height:14px}
.eye{margin-left:-1px}
.nsep{width:1px;height:16px;background:#eee5d6;margin:0 4px}
.w46{width:46px}
.w48{width:48px}
.pl{white-space:nowrap}
.lx{margin-left:15px;width:16px}
.ly{margin-left:16px;width:14px}
.ld{margin-left:15px;width:32px}
.ls{margin-left:21px;width:27px}
.ldrag{margin-left:15px;width:47px}
.lrot{margin-left:17px;width:57px}
.chk{width:13px;height:14px;background:#fffefb;border:1px solid #f6efe2;border-radius:2px}
.rot{width:30px}
.rot svg{width:20px;height:14px}
.zooms{margin-left:auto;display:flex;gap:5px}
.zb{width:24px;height:24px;background:#fff;border:1px solid #f6efe2;display:flex;align-items:center;justify-content:center;border-radius:2px}
.zb svg{width:15px;height:15px}

/* bottom strip */
.bottom{height:121px;background:#fffcf7;border-top:1px solid #efdcb2;display:flex;align-items:flex-start;flex:none}
.screens{width:80px;height:120px;border-right:1px solid #f3e7cf;display:flex;flex-direction:column;align-items:center;padding:34px 0 0 0;font-size:12px;color:#9c8a72}
.phone{width:32px;height:38px;margin-bottom:5px}
.card{width:89px;height:88px;margin:16px 0 0 16px;border:1px solid #f8f2e7;border-radius:8px;background:#fffdfa;position:relative;display:flex;justify-content:center;align-items:flex-end}
.card-sep{width:1px;height:53px;background:#f3e7cf;margin:30px 0 0 15px}
.card.sel{border:2px solid #ff9a46;background:#fffefb;font-size:12px;color:#a0917f}
.card.sel span{padding-bottom:1px}
.assets{margin-left:auto;width:239px;height:120px;border-left:1px solid #f3e7cf;position:relative;display:flex;gap:27px;padding:40px 0 0 32px}
.asset{width:40px;height:40px}
.ime{position:absolute;right:0;bottom:0;width:216px;height:28px;background:#fff;border:1px solid #a9c8f5;display:flex;align-items:center;gap:3px;padding-left:6px}
.im{width:20px;height:20px}
.imt{width:20px;font-size:15px;color:#2e7bea;text-align:center;line-height:20px}

/* task bar */
.taskbar{height:40px;background:linear-gradient(90deg,#23373f,#1b2a40);display:flex;align-items:center;color:#fff;flex:none}
.tb-win{width:17px;height:17px;margin-left:16px}
.tb-view{width:18px;height:18px;margin-left:29px}
.search{width:170px;height:34px;margin-left:18px;background:#fff;display:flex;align-items:center;padding-left:9px;color:#888}
.s-ic{width:16px;height:16px}
.s-text{font-size:14px;margin-left:10px;width:96px;white-space:nowrap}
.s-ad{font-size:9px;color:#aaa;border:1px solid #ddd;border-radius:2px;margin-left:8px;line-height:13px;background:#f5f5f5;white-space:nowrap}
.s-btn{width:78px;height:34px;background:#4f6cf0;display:flex;align-items:center;justify-content:center;font-size:14px;color:#fff}
.tb-app{width:24px;height:24px;margin-left:25px}
.tb-app.ol{margin-left:21px}
.tb-chrome{width:160px;height:40px;margin-left:13px;background:#53646b;border-bottom:3px solid #6ab0f0;display:flex;align-items:center;padding-left:12px;gap:3px;font-size:12.500px;white-space:nowrap}
.chrome{width:22px;height:22px;border-radius:50%;background:radial-gradient(circle,#4587f3 0 27%,#fff 28% 38%,transparent 39%),conic-gradient(#db4437 0 120deg,#0f9d58 0 240deg,#f4c20d 0 300deg,#db4437 0)}
.tray{margin-left:auto;display:flex;align-items:center;height:40px}
.caret{width:14px;height:8px}
.ti{width:16px;height:16px}
.net{width:18px;margin-left:32px}
.stack{margin-left:7px}
.ti-t{font-size:14px;margin-left:8px;width:18px;font-weight:700}
.qq{margin-left:9px}
.clock{width:112px;margin-left:15px;display:flex;flex-direction:column;align-items:center;font-size:12.500px;line-height:18px;white-space:nowrap;padding-bottom:2px}
.notif{width:24px;height:24px;margin-left:16px;position:relative}
.notif svg{width:18px;height:18px}
.notif i{position:absolute;right:-1px;bottom:-4px;width:16px;height:16px;border-radius:50%;background:#222;border:1px solid #999;font-size:11px;line-height:14px;text-align:center}
.desk{width:1px;height:40px;background:#4a5a68;margin:0 3px 0 10px}

/* overlays */
.menu{position:absolute;left:275px;top:801px;width:130px;height:160px;background:#fff;border-radius:4px;box-shadow:0 1px 8px rgba(120,100,70,.2);padding-top:4px}
.mi{height:38px;display:flex;align-items:center;padding:0 0 2px 16px;font-size:14px;color:#6b5436;white-space:nowrap}
.mi.on{background:#fdf2e0}
.ink{position:absolute;left:0;top:0;width:1920px;height:1080px;mix-blend-mode:multiply;pointer-events:none}
.ink path{fill:none;stroke-linecap:round;stroke-linejoin:round}
.red path{stroke:#ec1c24;stroke-width:4}
.pink path{stroke:#ee0088}
.ink .p-arrow{stroke-width:15;stroke-linecap:butt}
.ink .p-head{stroke-width:15;stroke-linecap:butt}
.ink .p-tail{stroke-width:7;stroke-linecap:butt}
.p-loop{stroke-width:11}
.ink .p-fill{fill:#ee0088;stroke-width:1}
.p-loop2{stroke-width:8}
.p-thick{stroke-width:12}
.p-tick{stroke-width:4}
.orange path{stroke:#ff5a00;stroke-width:6.500}
.orange .o-big{stroke-width:22}
.amber path{stroke:#ffb000;stroke-width:4}
```
